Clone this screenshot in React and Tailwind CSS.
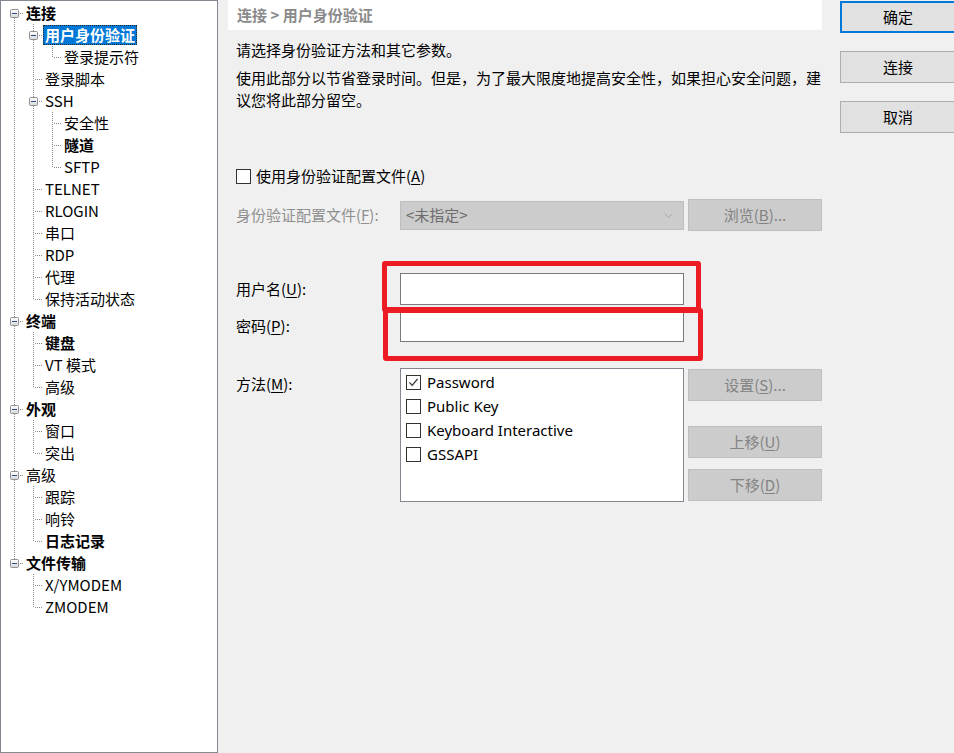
import React from 'react'

const cjk = "font-['Noto_Sans_CJK_SC',sans-serif]";
const latin = "font-['Noto_Sans','Noto_Sans_CJK_SC',sans-serif]";

const tree = [
  {
    t: '连接', b: true, c: [
      { t: '用户身份验证', b: true, sel: true, c: [{ t: '登录提示符' }] },
      { t: '登录脚本' },
      { t: 'SSH', c: [{ t: '安全性' }, { t: '隧道', b: true }, { t: 'SFTP' }] },
      { t: 'TELNET' },
      { t: 'RLOGIN' },
      { t: '串口' },
      { t: 'RDP' },
      { t: '代理' },
      { t: '保持活动状态' },
    ],
  },
  { t: '终端', b: true, c: [{ t: '键盘', b: true }, { t: 'VT 模式' }, { t: '高级' }] },
  { t: '外观', b: true, c: [{ t: '窗口' }, { t: '突出' }] },
  { t: '高级', c: [{ t: '跟踪' }, { t: '响铃' }, { t: '日志记录', b: true }] },
  { t: '文件传输', b: true, c: [{ t: 'X/YMODEM' }, { t: 'ZMODEM' }] },
];

function flatten(nodes, guides = [], out = []) {
  nodes.forEach((node, i) => {
    const last = i === nodes.length - 1;
    const first = guides.length === 0 && i === 0;
    out.push({ node, guides, last, first });
    if (node.c) flatten(node.c, [...guides, !last], out);
  });
  return out;
}

const rows = flatten(tree);

// one 19x22 cell of the tree's dotted connectors
function Guide({ top, bottom, horiz, box }) {
  const dot = { stroke: '#8a8a8a', strokeDasharray: '1 1', shapeRendering: 'crispEdges' };
  return (
    <svg width="19" height="22" className="shrink-0">
      {top && <line x1="10.5" y1="0" x2="10.5" y2="11" {...dot} />}
      {bottom && <line x1="10.5" y1="12" x2="10.5" y2="22" {...dot} />}
      {horiz && <line x1="12" y1="11.5" x2="19" y2="11.5" {...dot} />}
      {box && (
        <g>
          <defs>
            <linearGradient id="tvbox" x1="0" y1="0" x2="0" y2="1">
              <stop offset="0" stopColor="#ffffff" />
              <stop offset="1" stopColor="#d8d8d8" />
            </linearGradient>
          </defs>
          <rect x="6.5" y="7.5" width="8" height="8" rx="1" fill="url(#tvbox)" stroke="#919191" />
          <line x1="8" y1="11.5" x2="13" y2="11.5" stroke="#2f4a8a" shapeRendering="crispEdges" />
        </g>
      )}
    </svg>
  );
}

function TreeRow({ row }) {
  const { node, guides, last, first } = row;
  return (
    <div className="flex h-[22px] items-center">
      {guides.map((on, i) => (
        <Guide key={i} top={on} bottom={on} />
      ))}
      <Guide top={!first} bottom={!last} horiz box={!!node.c} />
      {node.sel ? (
        <span className="ml-[1px] flex h-[20px] items-center border border-dotted border-[#2a2a2a] bg-[#0078d7] px-[1px] font-bold text-white">
          {node.t}
        </span>
      ) : (
        <span className={`ml-[3px] whitespace-nowrap ${node.b ? 'font-bold' : ''}`}>{node.t}</span>
      )}
    </div>
  );
}

function Check({ checked }) {
  return (
    <span className="flex h-[15px] w-[15px] shrink-0 items-center justify-center border border-[#333333] bg-white">
      {checked && (
        <svg width="11" height="11" viewBox="0 0 11 11">
          <path d="M1.5 5.5 L4.2 8.3 L9.5 2" fill="none" stroke="#333333" strokeWidth="1.2" />
        </svg>
      )}
    </span>
  );
}

function DisabledButton({ children, className = '' }) {
  return (
    <div className={`flex h-[32px] w-[134px] shrink-0 items-center justify-center border border-[#bfbfbf] bg-[#cccccc] text-[#838383] ${className}`}>
      {children}
    </div>
  );
}

function DialogButton({ children, primary }) {
  return (
    <div
      className={`flex h-[32px] w-[116px] items-center justify-center bg-[#e1e1e1] text-black ${
        primary ? 'border-2 border-[#0078d7]' : 'border border-[#adadad]'
      }`}
    >
      {children}
    </div>
  );
}

const U = ({ children }) => <span className="underline underline-offset-2">{children}</span>;

export default function App() {
  const methods = [
    { name: 'Password', on: true },
    { name: 'Public Key' },
    { name: 'Keyboard Interactive' },
    { name: 'GSSAPI' },
  ];

  return (
    <div className={`flex h-[753px] w-[954px] overflow-hidden bg-[#f0f0f0] text-[15px] text-black ${cjk}`}>
      <div className="h-full w-[218px] shrink-0 border border-[#828790] bg-white pl-[3px] pt-[1px]">
        {rows.map((row, i) => (
          <TreeRow key={i} row={row} />
        ))}
      </div>

      <div className="relative ml-[10px] w-[594px] shrink-0">
        <div className="h-[30px] bg-white pl-[9px] font-bold leading-[30px] text-[#8a8a8a]">连接 &gt; 用户身份验证</div>

        <div className="pl-[8px]">
          <p className="mt-[9px] leading-[22px]">请选择身份验证方法和其它参数。</p>
          <p className="mt-[6px] w-[592px] leading-[22px]">
            使用此部分以节省登录时间。但是，为了最大限度地提高安全性，如果担心安全问题，建议您将此部分留空。
          </p>

          <div className="mt-[54px] flex h-[22px] items-center gap-[5px]">
            <Check />
            <span>使用身份验证配置文件(<U>A</U>)</span>
          </div>

          <div className="mt-[12px] flex h-[32px] items-center">
            <span className="w-[164px] shrink-0 text-[#8f8f8f]">
              身份验证配置文件(<U>F</U>):
            </span>
            <div className="flex h-[29px] w-[284px] shrink-0 items-center justify-between border border-[#bfbfbf] bg-[#cccccc] pl-[5px] pr-[10px] text-[#6d6d6d]">
              <span>&lt;未指定&gt;</span>
              <svg width="9" height="5" viewBox="0 0 9 5">
                <path d="M0.5 0.5 L4.5 4.5 L8.5 0.5" fill="none" stroke="#a8a8a8" />
              </svg>
            </div>
            <DisabledButton className="ml-[4px]">
              浏览(<U>B</U>)...
            </DisabledButton>
          </div>

          <div className="mt-[42px] flex h-[32px] items-center">
            <span className="w-[164px] shrink-0">
              用户名(<U>U</U>):
            </span>
            <div className="h-[32px] w-[284px] shrink-0 border border-[#7a7a7a] bg-white" />
          </div>

          <div className="mt-[5px] flex h-[32px] items-center">
            <span className="w-[164px] shrink-0">
              密码(<U>P</U>):
            </span>
            <div className="h-[32px] w-[284px] shrink-0 border border-[#7a7a7a] bg-white" />
          </div>

          <div className="mt-[26px] flex items-start">
            <span className="w-[164px] shrink-0 pt-[5px] leading-[22px]">
              方法(<U>M</U>):
            </span>
            <div className={`h-[134px] w-[284px] shrink-0 border border-[#828790] bg-white pl-[5px] pt-[1px] ${latin}`}>
              {methods.map((m) => (
                <div key={m.name} className="flex h-[24px] items-center gap-[6px]">
                  <Check checked={m.on} />
                  <span>{m.name}</span>
                </div>
              ))}
            </div>
            <div className="ml-[4px] flex flex-col pt-[1px]">
              <DisabledButton>
                设置(<U>S</U>)...
              </DisabledButton>
              <DisabledButton className="mt-[25px]">
                上移(<U>U</U>)
              </DisabledButton>
              <DisabledButton className="mt-[11px]">
                下移(<U>D</U>)
              </DisabledButton>
            </div>
          </div>
        </div>

        {/* highlight frames drawn over the credential fields */}
        <div className="absolute left-[154px] top-[261px] h-[51px] w-[319px] rounded-[3px] border-[5px] border-[#ed1c24]" />
        <div className="absolute left-[155px] top-[308px] h-[53px] w-[320px] rounded-[3px] border-[5px] border-[#ed1c24]" />
      </div>

      <div className="ml-[18px] flex w-[116px] shrink-0 flex-col gap-[18px] pt-[1px]">
        <DialogButton primary>确定</DialogButton>
        <DialogButton>连接</DialogButton>
        <DialogButton>取消</DialogButton>
      </div>
    </div>
  );
}
